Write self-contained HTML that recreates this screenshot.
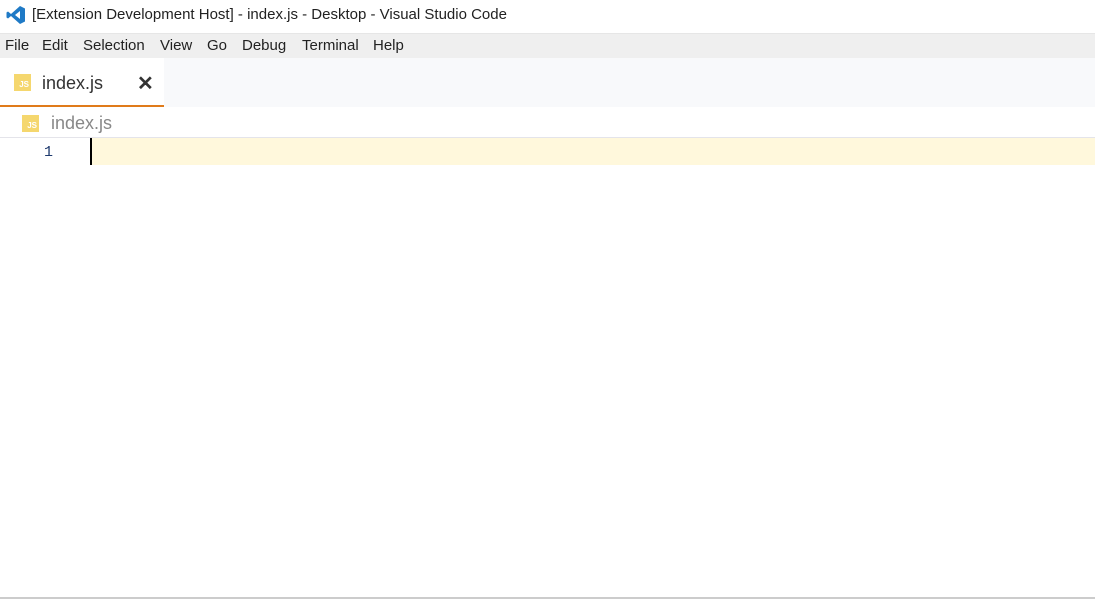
<!DOCTYPE html>
<html><head><style>
body{margin:0;width:1095px;height:599px;background:#fff;position:relative;overflow:hidden;font-family:"Segoe UI","Liberation Sans",sans-serif}
.a{position:absolute}
.m{position:absolute;top:37px;font-size:15px;color:#222}
.js{position:absolute;width:17px;height:17px;background:#f5d76e;color:#fff;font-size:8px;font-weight:bold;line-height:22px;text-align:right;box-sizing:border-box;padding-right:2px;font-family:"Liberation Sans",sans-serif}
</style></head><body>
<svg class="a" style="left:6px;top:5px" width="20" height="20" viewBox="0 0 20 20"><path d="M14 1 L19 3.5 V16.5 L14 19 L5 11 L2 13.5 L0.5 12.5 V7.5 L2 6.5 L5 9 Z M14 6 L9 10 L14 14 Z" fill="#1f7ac6" fill-rule="evenodd"/></svg>
<div class="a" style="left:32px;top:6px;font-size:15px;color:#222">[Extension Development Host] - index.js - Desktop - Visual Studio Code</div>
<div class="a" style="left:0;top:33px;width:1095px;height:25px;background:#efefef;border-top:1px solid #e6e6e6;box-sizing:border-box"></div>
<div class="m" style="left:5px">File</div>
<div class="m" style="left:42px">Edit</div>
<div class="m" style="left:83px">Selection</div>
<div class="m" style="left:160px">View</div>
<div class="m" style="left:207px">Go</div>
<div class="m" style="left:242px">Debug</div>
<div class="m" style="left:302px">Terminal</div>
<div class="m" style="left:373px">Help</div>
<div class="a" style="left:0;top:58px;width:1095px;height:49px;background:#f8f9fb"></div>
<div class="a" style="left:0;top:58px;width:164px;height:49px;background:#fff;border-bottom:2px solid #e07b1a;box-sizing:border-box"></div>
<div class="js" style="left:14px;top:74px">JS</div>
<div class="a" style="left:42px;top:73px;font-size:18px;color:#333">index.js</div>
<div class="a" style="left:137px;top:71px;font-size:20px;font-weight:bold;color:#333">✕</div>
<div class="js" style="left:22px;top:115px">JS</div>
<div class="a" style="left:51px;top:113px;font-size:18px;color:#888">index.js</div>
<div class="a" style="left:0;top:137px;width:1095px;height:1px;background:#e4e4ea"></div>
<div class="a" style="left:90px;top:138px;width:1005px;height:27px;background:#fff8dc"></div>
<div class="a" style="left:90px;top:138px;width:2px;height:27px;background:#000"></div>
<div class="a" style="left:44px;top:144px;font-size:15px;color:#1e3a6e;font-family:'Liberation Mono',monospace">1</div>
<div class="a" style="left:0;top:597px;width:1095px;height:2px;background:#ccc"></div>
</body></html>
